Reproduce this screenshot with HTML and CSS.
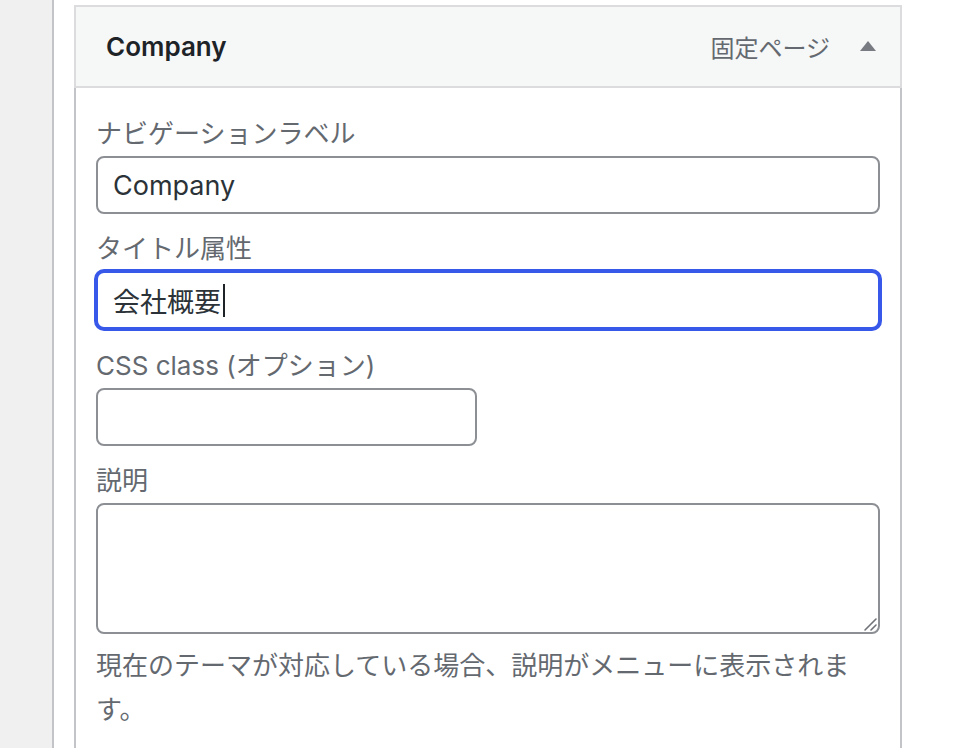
FILE: index.html
```html
<!DOCTYPE html>
<html lang="ja">
<head>
<meta charset="utf-8">
<title>Company メニュー項目</title>
<link rel="stylesheet" href="styles.css">
</head>
<body>
<div class="layout">
  <aside class="sidebar"></aside>
  <main class="main">
    <section class="menu-item">
      <header class="item-handle">
        <span class="item-title">Company</span>
        <span class="item-type">固定ページ</span>
        <svg class="item-toggle" width="16" height="10" viewBox="0 0 16 10" aria-hidden="true"><polygon points="8,0 16,10 0,10"/></svg>
      </header>
      <div class="item-settings">
        <label class="field">
          <span class="field-label">ナビゲーションラベル</span>
          <input class="text-input" type="text" value="Company">
        </label>
        <label class="field">
          <span class="field-label">タイトル属性</span>
          <div class="text-input is-focused" role="textbox"><span>会社概要</span><span class="caret"></span></div>
        </label>
        <label class="field field--spaced">
          <span class="field-label">CSS class (オプション)</span>
          <input class="text-input text-input--short" type="text" value="">
        </label>
        <label class="field field--last">
          <span class="field-label">説明</span>
          <span class="area-wrap">
            <textarea class="text-area"></textarea>
            <svg class="area-grip" width="16" height="16" viewBox="0 0 16 16" aria-hidden="true"><path d="M14 3 L3 14 M14 9 L9 14"/></svg>
          </span>
        </label>
        <p class="description">現在のテーマが対応している場合、説明がメニューに表示されます。</p>
      </div>
    </section>
  </main>
</div>
</body>
</html>
```

FILE: styles.css
```css
html, body {
  margin: 0;
  padding: 0;
  height: 100%;
  overflow: hidden;
}

body {
  background: #f0f0f1;
  font-family: Inter, "Noto Sans CJK JP", sans-serif;
  color: #2c3338;
}

.layout {
  display: flex;
  min-height: 100%;
}

.sidebar {
  width: 52px;
  flex: none;
  background: #f0f0f1;
}

.main {
  flex: 1;
  background: #fff;
  border-left: 2px solid #c3c4c7;
  padding: 5px 0 0 20px;
}

.menu-item {
  width: 828px;
}

.item-handle {
  display: flex;
  align-items: center;
  height: 79px;
  padding: 0 24px 0 30px;
  background: #f6f7f7;
  border: 2px solid #dcdcde;
}

.item-title {
  flex: 1;
  font-size: 26px;
  font-weight: 600;
  color: #1d2327;
  line-height: 79px;
}

.item-type {
  font-size: 24px;
  color: #646970;
  margin-right: 30px;
}

.item-toggle {
  fill: #787c82;
  margin-top: -1px;
}

.item-settings {
  border: 2px solid #c3c4c7;
  border-top: none;
  padding: 28px 20px 80px;
  display: flex;
  flex-direction: column;
}

.field {
  display: flex;
  flex-direction: column;
  gap: 4px;
  margin-bottom: 17px;
}

.field--spaced {
  margin-top: 2px;
}

.field--last {
  margin-bottom: 0;
}

.field-label {
  font-size: 26px;
  line-height: 36px;
  color: #646970;
}

.text-input {
  box-sizing: border-box;
  height: 58px;
  width: 100%;
  margin: 0;
  padding: 0 15px;
  border: 2px solid #8c8f94;
  border-radius: 8px;
  background: #fff;
  font: inherit;
  font-size: 27px;
  color: #2c3338;
  outline: none;
}

.text-input--short {
  width: 381px;
}

.is-focused {
  display: flex;
  align-items: center;
  border-color: #3858e9;
  box-shadow: 0 0 0 2px #3858e9;
}

.caret {
  display: inline-block;
  width: 2px;
  height: 33px;
  margin-left: 2px;
  background: #1d2327;
}

.area-wrap {
  position: relative;
  display: block;
}

.text-area {
  display: block;
  box-sizing: border-box;
  width: 100%;
  height: 131px;
  margin: 0;
  padding: 8px 15px;
  border: 2px solid #8c8f94;
  border-radius: 8px;
  background: #fff;
  font: inherit;
  font-size: 27px;
  color: #2c3338;
  outline: none;
  resize: none;
}

.area-grip {
  position: absolute;
  right: 2px;
  bottom: 2px;
  fill: none;
  stroke: #6f7378;
  stroke-width: 1.6;
  stroke-linecap: round;
}

.description {
  margin: 10px 0 0;
  font-size: 26px;
  line-height: 44px;
  color: #646970;
}
```
